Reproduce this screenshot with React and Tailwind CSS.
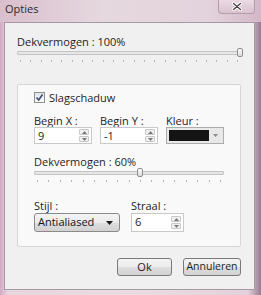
import React from "react";

function Ticks({ count }) {
  return (
    <div className="flex justify-between px-[3px] mt-[3px] h-[2px]">
      {Array.from({ length: count }).map((_, i) => (
        <div key={i} className="w-[1px] h-[2px] bg-[#b4b4b4]" />
      ))}
    </div>
  );
}

function Slider({ pos, ticks }) {
  return (
    <div className="flex flex-col">
      <div className="relative h-[9px] flex items-center">
        <div className="w-full h-[4px] border border-[#c4c4c4] bg-[#e6e6e6] rounded-[1px]" />
        <div
          className="absolute top-0 w-[6px] h-[9px] rounded-[2px] border border-[#8e8e8e] bg-[linear-gradient(#fafafa,#dcdcdc)]"
          style={{ left: pos }}
        />
      </div>
      <Ticks count={ticks} />
    </div>
  );
}

function Spin() {
  return (
    <div className="flex flex-col gap-[1px] mr-[2px]">
      <div className="w-[10px] h-[6px] border border-[#c8c8c8] bg-[#f0f0f0] rounded-[1px] flex items-center justify-center">
        <svg width="5" height="3" viewBox="0 0 5 3"><path d="M0 3 L2.5 0 L5 3 Z" fill="#7a7a7a" /></svg>
      </div>
      <div className="w-[10px] h-[6px] border border-[#c8c8c8] bg-[#f0f0f0] rounded-[1px] flex items-center justify-center">
        <svg width="5" height="3" viewBox="0 0 5 3"><path d="M0 0 L2.5 3 L5 0 Z" fill="#7a7a7a" /></svg>
      </div>
    </div>
  );
}

function NumInput({ value, w }) {
  return (
    <div className={`${w} h-[17px] bg-white border border-[#c9c9c9] flex items-center justify-between`}>
      <span className="pl-[3px] leading-[13px]">{value}</span>
      <Spin />
    </div>
  );
}

export default function App() {
  return (
    <div className="w-[261px] h-[295px] overflow-hidden flex flex-col font-['Open_Sans',sans-serif] text-[11px] text-[#1e1e1e] bg-[linear-gradient(90deg,#d2a9c4_0%,#e6d6de_3%,#e9dde3_50%,#e2d2db_95%,#9c7a90_100%)]">
      <div className="h-[22px] flex items-start justify-between pl-[5px] bg-[linear-gradient(90deg,#d9bfcd,#e6d8df_40%,#e3d3dc_80%,#d4b8c8)]">
        <span className="pt-[2px] text-[11px] leading-[14px] text-[#2a2a2a]">Opties</span>
        <div className="w-[37px] h-[14px] mr-[6px] rounded-b-[4px] border border-t-0 border-[#b49cab] bg-[linear-gradient(#ead9e2,#d9c3d0)] flex items-center justify-center">
          <svg width="10" height="9" viewBox="0 0 10 9">
            <path d="M1.5 1.5 L8.5 7.5 M8.5 1.5 L1.5 7.5" stroke="#ffffff" strokeWidth="3.2" strokeLinecap="round" />
            <path d="M1.5 1.5 L8.5 7.5 M8.5 1.5 L1.5 7.5" stroke="#4e3f49" strokeWidth="1.3" strokeLinecap="round" />
          </svg>
        </div>
      </div>
      <div className="flex-1 ml-[4px] mr-[6px] mb-[5px] bg-[#f0f0f0] border border-[#a898a4] pl-[12px] pr-[13px] pt-[12px] flex flex-col">
        <div className="leading-[13px]">Dekvermogen : 100%</div>
        <Slider pos={220} ticks={22} />
        <div className="mt-[22px] h-[163px] border border-[#d6d6d6] rounded-[2px] bg-[#f9f9f9] pl-[16px] pt-[6px] flex flex-col">
          <div className="flex items-center gap-[4px] h-[13px]">
            <div className="w-[11px] h-[11px] border border-[#8f8f8f] bg-[linear-gradient(#e4e4e4,#fafafa)] flex items-center justify-center">
              <svg width="9" height="9" viewBox="0 0 9 9"><path d="M1.5 4.5 L3.7 7 L7.5 1.5" stroke="#3a4a7a" strokeWidth="1.6" fill="none" /></svg>
            </div>
            <span className="leading-[13px]">Slagschaduw</span>
          </div>
          <div className="flex gap-[8px] mt-[10px]">
            <div className="flex flex-col">
              <span className="leading-[13px]">Begin X :</span>
              <NumInput value="9" w="w-[58px]" />
            </div>
            <div className="flex flex-col">
              <span className="leading-[13px]">Begin Y :</span>
              <NumInput value="-1" w="w-[58px]" />
            </div>
            <div className="flex flex-col">
              <span className="leading-[13px]">Kleur :</span>
              <div className="w-[58px] h-[17px] border border-[#acacac] bg-[#e8e8e8] p-[2px] flex gap-[1px]">
                <div className="flex-1 bg-[#141414]" />
                <div className="w-[11px] flex items-center justify-center">
                  <svg width="5" height="3" viewBox="0 0 5 3"><path d="M0 0 L2.5 3 L5 0 Z" fill="#8a8a8a" /></svg>
                </div>
              </div>
            </div>
          </div>
          <div className="mt-[12px] leading-[12px]">Dekvermogen : 60%</div>
          <div className="w-[190px]">
            <Slider pos={103} ticks={17} />
          </div>
          <div className="flex gap-[11px] mt-[18px]">
            <div className="flex flex-col">
              <span className="leading-[12px]">Stijl :</span>
              <div className="mt-[1px] w-[86px] h-[19px] rounded-[3px] border border-[#8a8a8a] bg-[linear-gradient(#f4f4f4_0%,#ebebeb_50%,#dddddd_51%,#d2d2d2_100%)] flex items-center justify-between pl-[3px] pr-[6px]">
                <span className="font-medium text-[#111]">Antialiased</span>
                <svg width="7" height="4" viewBox="0 0 7 4"><path d="M0 0 L3.5 4 L7 0 Z" fill="#1a1a1a" /></svg>
              </div>
            </div>
            <div className="flex flex-col">
              <span className="leading-[12px]">Straal :</span>
              <div className="mt-[1px] w-[53px] h-[19px] bg-white border border-[#c9c9c9] flex items-center justify-between">
                <span className="pl-[3px]">6</span>
                <Spin />
              </div>
            </div>
          </div>
        </div>
        <div className="flex justify-end gap-[11px] mt-[11px]">
          <div className="w-[55px] h-[18px] rounded-[3px] border border-[#7a7a7a] bg-[linear-gradient(#f4f4f4_0%,#ebebeb_50%,#dddddd_51%,#d2d2d2_100%)] flex items-center justify-center">Ok</div>
          <div className="w-[58px] h-[18px] rounded-[3px] border border-[#7a7a7a] bg-[linear-gradient(#f4f4f4_0%,#ebebeb_50%,#dddddd_51%,#d2d2d2_100%)] flex items-center justify-center text-[10.5px]">Annuleren</div>
        </div>
      </div>
    </div>
  );
}
